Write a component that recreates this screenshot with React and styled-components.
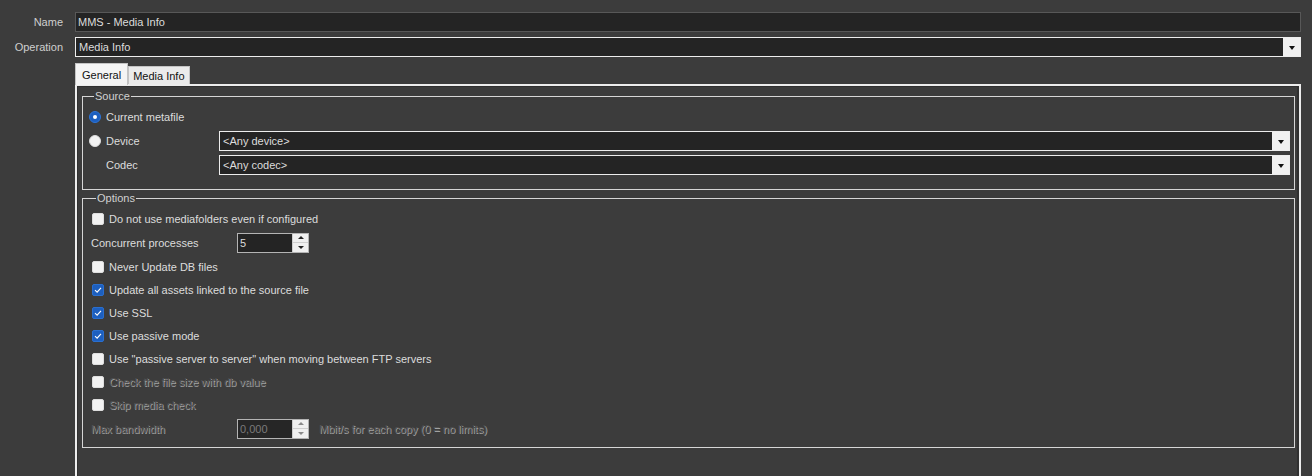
import React from 'react'
import styled, { createGlobalStyle } from 'styled-components'

const colors = {
  bg: '#3c3c3c',
  field: '#242424',
  text: '#dcdcdc',
  light: '#ededed',
  blue: '#1d5fbf',
}

const GlobalStyle = createGlobalStyle`
  html, body {
    margin: 0;
    padding: 0;
    background: ${colors.bg};
    overflow: hidden;
  }
  body {
    font-family: "Liberation Sans", Arial, sans-serif;
    font-size: 11px;
    color: ${colors.text};
  }
`

const Page = styled.div`
  display: flex;
  flex-direction: column;
  height: 476px;
  box-sizing: border-box;
  padding: 12px 11px 0 0;
  overflow: hidden;
`

const FieldRow = styled.div`
  display: grid;
  grid-template-columns: 63px 1fr;
  column-gap: 12px;
  align-items: center;
  height: 20px;
  margin-bottom: 5px;
`

const Label = styled.span`
  text-align: right;
  color: #cfcfcf;
  white-space: nowrap;
`

const TextBox = styled.div`
  height: 20px;
  box-sizing: border-box;
  border: 1px solid #585858;
  background: ${colors.field};
  color: ${colors.text};
  padding: 0 2px;
  display: flex;
  align-items: center;
`

const Combo = styled.div`
  height: 20px;
  box-sizing: border-box;
  border: 1px solid ${colors.light};
  background: ${colors.field};
  display: flex;
  align-items: stretch;
`

const ComboText = styled.span`
  flex: 1;
  display: flex;
  align-items: center;
  padding: 0 3px;
  color: ${colors.text};
`

const ComboButton = styled.span`
  width: 17px;
  background: #f0f0f0;
  display: flex;
  align-items: center;
  justify-content: center;
  &::after {
    content: '';
    border-left: 3.5px solid transparent;
    border-right: 3.5px solid transparent;
    border-top: 4px solid #111;
    margin-top: 1px;
  }
`

const TabStrip = styled.div`
  display: flex;
  align-items: flex-end;
  margin: 1px 0 0 75px;
  height: 21px;
  position: relative;
  z-index: 1;
`

const Tab = styled.div`
  box-sizing: border-box;
  height: ${(p) => (p.$active ? 22 : 18)}px;
  padding: 0 ${(p) => (p.$active ? 6 : 4)}px;
  margin-bottom: ${(p) => (p.$active ? -1 : 0)}px;
  background: ${(p) => (p.$active ? '#f4f4f4' : '#ebebeb')};
  border: 1px solid #c4c4c4;
  border-bottom: none;
  color: #111;
  display: flex;
  align-items: center;
  font-size: 11px;
`

const Panel = styled.div`
  flex: 1;
  margin-left: 75px;
  border: 2px solid ${colors.light};
  border-bottom: none;
  box-shadow: inset 1px 1px 0 #303030, inset -2px 0 0 #303030;
  padding: 4px 4px 0 5px;
`

const Group = styled.fieldset`
  margin: ${(p) => p.$top || 0}px 0 0;
  border: 1px solid #d6d6d6;
  padding: ${(p) => p.$pad};
  min-width: 0;
`

const Legend = styled.legend`
  padding: 0 1px;
  margin-left: 5px;
  line-height: 13px;
  color: #d0d0d0;
`

const SourceGrid = styled.div`
  display: grid;
  grid-template-columns: 130px 1fr;
  grid-template-rows: 20px 20px 20px;
  row-gap: 4px;
  align-items: center;
`

const Choice = styled.label`
  display: flex;
  align-items: center;
  gap: ${(p) => p.$gap || 5}px;
  height: ${(p) => p.$h || 23}px;
  grid-column: ${(p) => p.$span || 'auto'};
  white-space: nowrap;
  color: ${(p) => (p.$disabled ? '#525252' : colors.text)};
  text-shadow: ${(p) => (p.$disabled ? '1px 1px 0 #a2a2a2' : 'none')};
`

const Radio = styled.span`
  width: 12px;
  height: 12px;
  border-radius: 50%;
  box-sizing: border-box;
  flex: none;
  background: ${(p) => (p.$checked ? colors.blue : '#f2f2f2')};
  border: 1px solid ${(p) => (p.$checked ? '#2c74d8' : '#dcdcdc')};
  display: flex;
  align-items: center;
  justify-content: center;
  &::after {
    content: '';
    width: 4px;
    height: 4px;
    border-radius: 50%;
    background: ${(p) => (p.$checked ? '#fff' : 'transparent')};
  }
`

const Box = styled.span`
  width: 12px;
  height: 12px;
  border-radius: 2px;
  box-sizing: border-box;
  flex: none;
  margin-left: 1px;
  background: ${(p) => (p.$checked ? colors.blue : '#f2f2f2')};
  border: 1px solid ${(p) => (p.$checked ? '#2a6fcf' : '#dedede')};
  display: flex;
  align-items: center;
  justify-content: center;
`

const SubLabel = styled.span`
  padding-left: 17px;
  color: ${colors.text};
`

const OptionRow = styled.div`
  display: grid;
  grid-template-columns: 136px 72px auto;
  column-gap: 10px;
  align-items: center;
  height: 25px;
  color: ${(p) => (p.$disabled ? '#525252' : colors.text)};
  text-shadow: ${(p) => (p.$disabled ? '1px 1px 0 #a2a2a2' : 'none')};
  white-space: nowrap;
`

const Spin = styled.div`
  height: 20px;
  box-sizing: border-box;
  border: 1px solid #b4b4b4;
  background: ${(p) => (p.$disabled ? '#262626' : colors.field)};
  display: flex;
  text-shadow: none;
`

const SpinValue = styled.span`
  flex: 1;
  display: flex;
  align-items: center;
  padding: 0 2px;
  color: ${(p) => (p.$disabled ? '#7a7a7a' : colors.text)};
`

const SpinButtons = styled.span`
  width: 15px;
  display: flex;
  flex-direction: column;
  background: #f0f0f0;
  border-left: 1px solid #cfcfcf;
`

const SpinArrow = styled.span`
  flex: 1;
  display: flex;
  align-items: center;
  justify-content: center;
  & + & {
    border-top: 1px solid #cfcfcf;
  }
  &::after {
    content: '';
    border-left: 3px solid transparent;
    border-right: 3px solid transparent;
    ${(p) => (p.$down ? 'border-top' : 'border-bottom')}: 3px solid ${(p) =>
      p.$disabled ? '#8a8a8a' : '#222'};
  }
`

const Check = ({ checked }) => (
  <Box $checked={checked}>
    {checked && (
      <svg width="8" height="8" viewBox="0 0 8 8">
        <path d="M1 4.2 L3.1 6.2 L7 1.8" fill="none" stroke="#fff" strokeWidth="1.1" />
      </svg>
    )}
  </Box>
)

const SpinBox = ({ value, disabled }) => (
  <Spin $disabled={disabled}>
    <SpinValue $disabled={disabled}>{value}</SpinValue>
    <SpinButtons>
      <SpinArrow $disabled={disabled} />
      <SpinArrow $down $disabled={disabled} />
    </SpinButtons>
  </Spin>
)

const options = [
  { type: 'check', label: 'Do not use mediafolders even if configured' },
  { type: 'spin', label: 'Concurrent processes', value: '5' },
  { type: 'check', label: 'Never Update DB files' },
  { type: 'check', label: 'Update all assets linked to the source file', checked: true },
  { type: 'check', label: 'Use SSL', checked: true },
  { type: 'check', label: 'Use passive mode', checked: true },
  { type: 'check', label: 'Use "passive server to server" when moving between FTP servers' },
  { type: 'check', label: 'Check the file size with db value', disabled: true },
  { type: 'check', label: 'Skip media check', disabled: true },
  {
    type: 'spin',
    label: 'Max bandwidth',
    value: '0,000',
    suffix: 'Mbit/s for each copy (0 = no limits)',
    disabled: true,
  },
]

export default function App() {
  return (
    <>
      <GlobalStyle />
      <Page>
        <FieldRow>
          <Label>Name</Label>
          <TextBox>MMS - Media Info</TextBox>
        </FieldRow>
        <FieldRow>
          <Label>Operation</Label>
          <Combo>
            <ComboText>Media Info</ComboText>
            <ComboButton />
          </Combo>
        </FieldRow>

        <TabStrip>
          <Tab $active>General</Tab>
          <Tab>Media Info</Tab>
        </TabStrip>

        <Panel>
          <Group $top={0} $pad="4px 4px 14px 6px">
            <Legend>Source</Legend>
            <SourceGrid>
              <Choice $span="1 / -1" $h={20}>
                <Radio $checked />
                Current metafile
              </Choice>
              <Choice $h={20}>
                <Radio />
                Device
              </Choice>
              <Combo>
                <ComboText>&lt;Any device&gt;</ComboText>
                <ComboButton />
              </Combo>
              <SubLabel>Codec</SubLabel>
              <Combo>
                <ComboText>&lt;Any codec&gt;</ComboText>
                <ComboButton />
              </Combo>
            </SourceGrid>
          </Group>

          <Group $top={2} $pad="2px 4px 6px 8px">
            <Legend>Options</Legend>
            {options.map((o) =>
              o.type === 'check' ? (
                <Choice key={o.label} $disabled={o.disabled}>
                  <Check checked={o.checked} />
                  {o.label}
                </Choice>
              ) : (
                <OptionRow key={o.label} $disabled={o.disabled}>
                  <span>{o.label}</span>
                  <SpinBox value={o.value} disabled={o.disabled} />
                  {o.suffix && <span>{o.suffix}</span>}
                </OptionRow>
              )
            )}
          </Group>
        </Panel>
      </Page>
    </>
  )
}
